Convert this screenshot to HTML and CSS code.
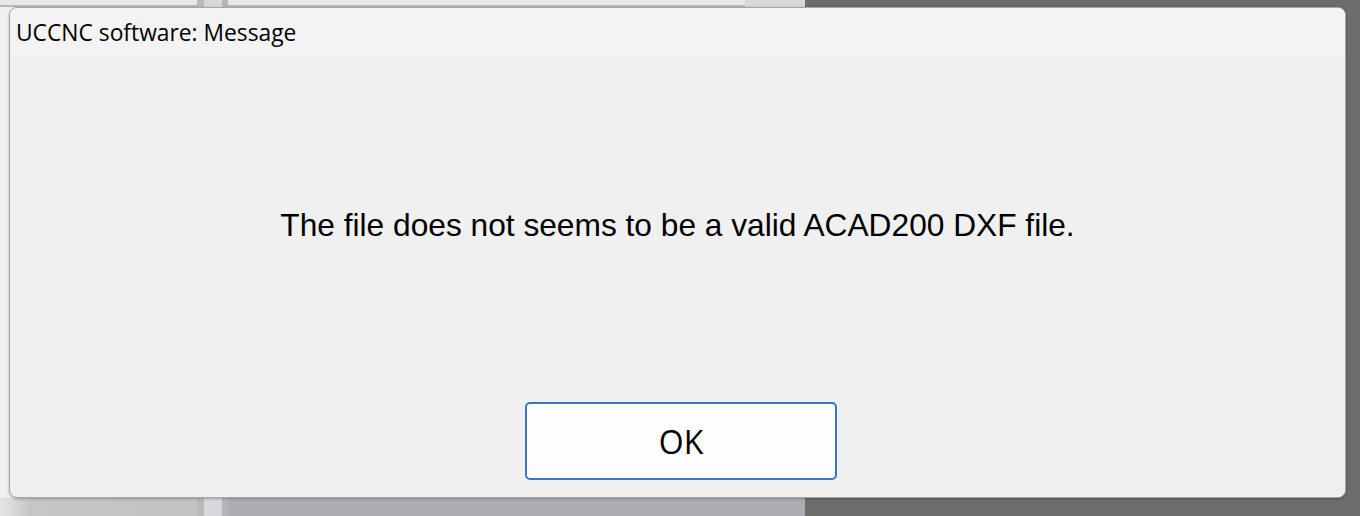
FILE: index.html
```html
<!DOCTYPE html>
<html lang="en">
<head>
    <meta charset="UTF-8">
    <title>UCCNC software: Message</title>
    <link rel="stylesheet" href="styles.css">
</head>
<body>
    <div class="desktop">
        <div class="dialog">
            <div class="title-bar">UCCNC software: Message</div>
            <div class="dialog-body">
                <p class="message">The file does not seems to be a valid ACAD200 DXF file.</p>
                <div class="buttons">
                    <button class="ok-btn">OK</button>
                </div>
            </div>
        </div>
    </div>
</body>
</html>
```

FILE: styles.css
```css
html, body {
    margin: 0;
    padding: 0;
}
body {
    width: 1360px;
    height: 516px;
    overflow: hidden;
}
.desktop {
    box-sizing: border-box;
    width: 1360px;
    height: 516px;
    padding: 7px 0 0 9px;
    background:
        linear-gradient(to right, transparent 805px, #6d6e6c 805px),
        linear-gradient(to right, transparent 197px, #b9b9bb 197px, #b9b9bb 204px, #d7d7de 204px, #d7d7de 222px, #b5b5b7 222px, #b5b5b7 228px, transparent 228px),
        linear-gradient(to right, transparent 745px, #d6d6dc 745px, #d6d6dc 805px, transparent 805px) 0 0 / 100% 7px no-repeat,
        linear-gradient(to bottom, #e8e8e8 0, #e8e8e8 5px, #b8b8b8 5px, #b8b8b8 7px, #f0f0f0 7px, #f0f0f0 498px, transparent 498px),
        linear-gradient(to right, #e6e6e6 0, #c6c6c6 30px, #c2c2c2 197px, #adadb3 228px, #adadb3 805px);
}
.dialog {
    box-sizing: border-box;
    width: 1337px;
    height: 491px;
    border: 1px solid #a6a6a6;
    border-radius: 8px;
    background: #f0f0f0;
    overflow: hidden;
    box-shadow: 0 1px 3px rgba(0, 0, 0, 0.25);
}
.title-bar {
    height: 49px;
    padding: 10px 0 0 6px;
    box-sizing: border-box;
    background: #f3f3f3;
    color: #000;
    font-family: "Open Sans", "Noto Sans", sans-serif;
    font-size: 22.8px;
    line-height: 30px;
}
.dialog-body {
    display: flex;
    flex-direction: column;
    align-items: center;
}
.message {
    margin: 148px 0 0 0;
    font-family: "Liberation Sans", Arial, sans-serif;
    font-size: 31.7px;
    line-height: 40px;
    color: #000;
}
.buttons {
    margin-top: 157px;
    padding-left: 7px;
}
.ok-btn {
    width: 312px;
    height: 78px;
    background: #fdfdfd;
    border: 2px solid #3a76c6;
    border-radius: 5px;
    font-family: "Open Sans", "Noto Sans", sans-serif;
    font-size: 32px;
    color: #000;
    padding: 0;
    cursor: pointer;
}
```
